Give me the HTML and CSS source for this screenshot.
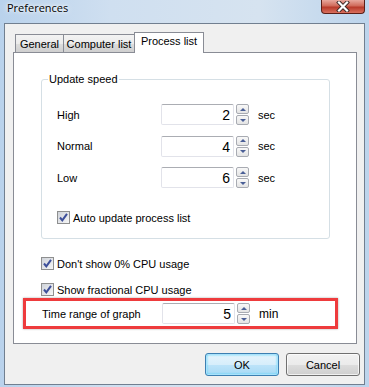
FILE: index.html
```html
<!DOCTYPE html>
<html lang="en">
<head>
  <meta charset="UTF-8">
  <link rel="stylesheet" href="styles.css">
  <title>Preferences</title>
</head>
<body>
  <div class="window">
    <div class="titlebar">
      <span class="title">Preferences</span>
      <span class="close">
        <svg width="14" height="11" viewBox="0 0 14 11">
          <path d="M3 1.5 L11 9.5 M11 1.5 L3 9.5" stroke="#3b2a28" stroke-width="4" stroke-linecap="square"/>
          <path d="M3 1.5 L11 9.5 M11 1.5 L3 9.5" stroke="#fff" stroke-width="2.2" stroke-linecap="square"/>
        </svg>
      </span>
    </div>
    <div class="dialog">
      <div class="tabs">
        <div class="tab">General</div>
        <div class="tab">Computer list</div>
        <div class="tab active">Process list</div>
      </div>
      <div class="panel">
        <fieldset class="group">
          <legend>Update speed</legend>
          <div class="speed-rows">
            <div class="row">
              <span class="label">High</span>
              <span class="field">2</span>
              <span class="spin"><span class="up"></span><span class="down"></span></span>
              <span class="unit">sec</span>
            </div>
            <div class="row">
              <span class="label">Normal</span>
              <span class="field">4</span>
              <span class="spin"><span class="up"></span><span class="down"></span></span>
              <span class="unit">sec</span>
            </div>
            <div class="row">
              <span class="label">Low</span>
              <span class="field">6</span>
              <span class="spin"><span class="up"></span><span class="down"></span></span>
              <span class="unit">sec</span>
            </div>
          </div>
          <label class="check auto-update">
            <span class="box"><svg width="11" height="11" viewBox="0 0 11 11"><path d="M2 5.5 L4.3 8.3 L9 1.8" fill="none" stroke="#3d4f9a" stroke-width="2"/></svg></span>
            Auto update process list
          </label>
        </fieldset>
        <label class="check cpu-zero">
          <span class="box"><svg width="11" height="11" viewBox="0 0 11 11"><path d="M2 5.5 L4.3 8.3 L9 1.8" fill="none" stroke="#3d4f9a" stroke-width="2"/></svg></span>
          Don't show 0% CPU usage
        </label>
        <label class="check cpu-frac">
          <span class="box"><svg width="11" height="11" viewBox="0 0 11 11"><path d="M2 5.5 L4.3 8.3 L9 1.8" fill="none" stroke="#3d4f9a" stroke-width="2"/></svg></span>
          Show fractional CPU usage
        </label>
        <div class="highlight">
          <div class="row">
            <span class="label wide">Time range of graph</span>
            <span class="field">5</span>
            <span class="spin"><span class="up"></span><span class="down"></span></span>
            <span class="unit min">min</span>
          </div>
        </div>
      </div>
      <div class="buttons">
        <button class="btn default">OK</button>
        <button class="btn">Cancel</button>
      </div>
    </div>
  </div>
</body>
</html>
```

FILE: styles.css
```css
body {
  margin: 0;
  font-family: "Liberation Sans", Arial, sans-serif;
  font-size: 11px;
  color: #000;
}
.window {
  width: 369px;
  height: 387px;
  box-sizing: border-box;
  padding: 0 4px 2px 4px;
  background: linear-gradient(to right, #b9d2ec, #cfdff0 30%, #d6e3f0 70%, #bcd4ec);
}
.titlebar {
  height: 23px;
  display: flex;
  justify-content: space-between;
  align-items: flex-start;
}
.title {
  font-family: "Open Sans", "Noto Sans", sans-serif;
  font-size: 11px;
  padding: 0 0 0 3px;
  text-shadow: 0 0 6px #fff, 0 0 3px #fff;
}
.close {
  width: 44px;
  height: 14px;
  box-sizing: border-box;
  border: 1px solid #5a1f18;
  border-top: none;
  border-radius: 0 0 4px 4px;
  background: linear-gradient(#e8a89d, #d06a5a 45%, #b83a2a 55%, #d9705e);
  display: flex;
  justify-content: center;
  align-items: center;
}

.dialog {
  height: 362px;
  box-sizing: border-box;
  border: 1px solid #717f90;
  background: #f0f0f0;
  padding: 8px 4px 0 8px;
}
.tabs {
  display: flex;
  align-items: flex-end;
  padding-left: 2px;
  height: 20px;
}
.tab {
  height: 18px;
  box-sizing: border-box;
  border: 1px solid #898c95;
  border-bottom: none;
  margin-right: -1px;
  background: linear-gradient(#f3f3f3, #ebebeb 50%, #dddddd 51%, #cfcfcf);
  text-align: center;
  white-space: nowrap;
  line-height: 17px;
  padding-top: 1px;
}
.tab:nth-child(1) { width: 49px; }
.tab:nth-child(2) { width: 72px; }
.tab.active {
  width: 70px;
  height: 21px;
  margin-bottom: -1px;
  background: #fff;
  position: relative;
  z-index: 1;
  line-height: 16px;
  padding-top: 0;
}
.panel {
  height: 292px;
  box-sizing: border-box;
  margin-right: 3px;
  border: 1px solid #898c95;
  background: #fff;
  padding: 19px 0 0 27px;
}

.group {
  width: 289px;
  box-sizing: border-box;
  margin: 0;
  padding: 0 0 0 15px;
  border: 1px solid #d5dfe5;
  border-radius: 3px;
  height: 167px;
}
.group legend {
  padding: 0 1px;
  margin-left: -9px;
  line-height: 15px;
}
.speed-rows {
  display: grid;
  grid-auto-rows: 21px;
  row-gap: 10.5px;
  margin-top: 17px;
}
.row {
  display: flex;
  align-items: center;
}
.label {
  width: 104px;
}
.label.wide {
  width: 120px;
}
.field {
  width: 73px;
  height: 21px;
  box-sizing: border-box;
  border: 1px solid #e2e3ea;
  border-top-color: #abadb3;
  border-radius: 2px;
  text-align: right;
  padding-right: 3px;
  font-size: 14px;
  line-height: 20px;
}
.spin {
  display: flex;
  flex-direction: column;
  gap: 1px;
  margin-left: 2px;
}
.spin span {
  width: 13px;
  height: 10px;
  box-sizing: border-box;
  border: 1px solid #a8abb2;
  border-radius: 2px;
  background: linear-gradient(#f8f8f8, #e4e4e4);
  display: flex;
  justify-content: center;
  align-items: center;
}
.spin .up::after {
  content: "";
  border-left: 3px solid transparent;
  border-right: 3px solid transparent;
  border-bottom: 3px solid #4a5f96;
}
.spin .down::after {
  content: "";
  border-left: 3px solid transparent;
  border-right: 3px solid transparent;
  border-top: 3px solid #4a5f96;
}
.unit {
  margin-left: 9px;
}
.unit.min {
  font-size: 12px;
}

.check {
  display: flex;
  align-items: center;
  gap: 3px;
  height: 15px;
}
.box {
  width: 13px;
  height: 13px;
  box-sizing: border-box;
  border: 1px solid #8e8f8f;
  background: linear-gradient(135deg, #cfd3da, #f6f6f6);
  display: flex;
  justify-content: center;
  align-items: center;
}
.auto-update {
  margin-top: 22px;
}
.cpu-zero {
  margin-top: 17px;
}
.cpu-frac {
  margin-top: 11px;
}
.highlight {
  width: 315px;
  height: 31px;
  box-sizing: border-box;
  margin: 1px 0 0 -18px;
  border: 3px solid #ee3b3d;
  box-shadow: 0 0 2px rgba(0, 0, 0, 0.35);
  padding-left: 16px;
  display: flex;
  align-items: center;
}

.buttons {
  display: flex;
  justify-content: flex-end;
  gap: 7px;
  margin-top: 9px;
}
.btn {
  width: 74px;
  height: 23px;
  border: 1px solid #707070;
  border-radius: 3px;
  background: linear-gradient(#f2f2f2, #ebebeb 50%, #dddddd 51%, #cfcfcf);
  font-family: inherit;
  font-size: 11px;
  padding: 0;
  box-shadow: inset 0 0 0 1px rgba(255, 255, 255, 0.7);
}
.btn.default {
  border-color: #3c7fb1;
  background: linear-gradient(#e5f4fc, #d7eefb 50%, #bde4f9 51%, #a7d9f5);
  box-shadow: inset 0 0 0 1px #a9e2fb, inset 0 0 2px 1px #48d3fb;
}
```
